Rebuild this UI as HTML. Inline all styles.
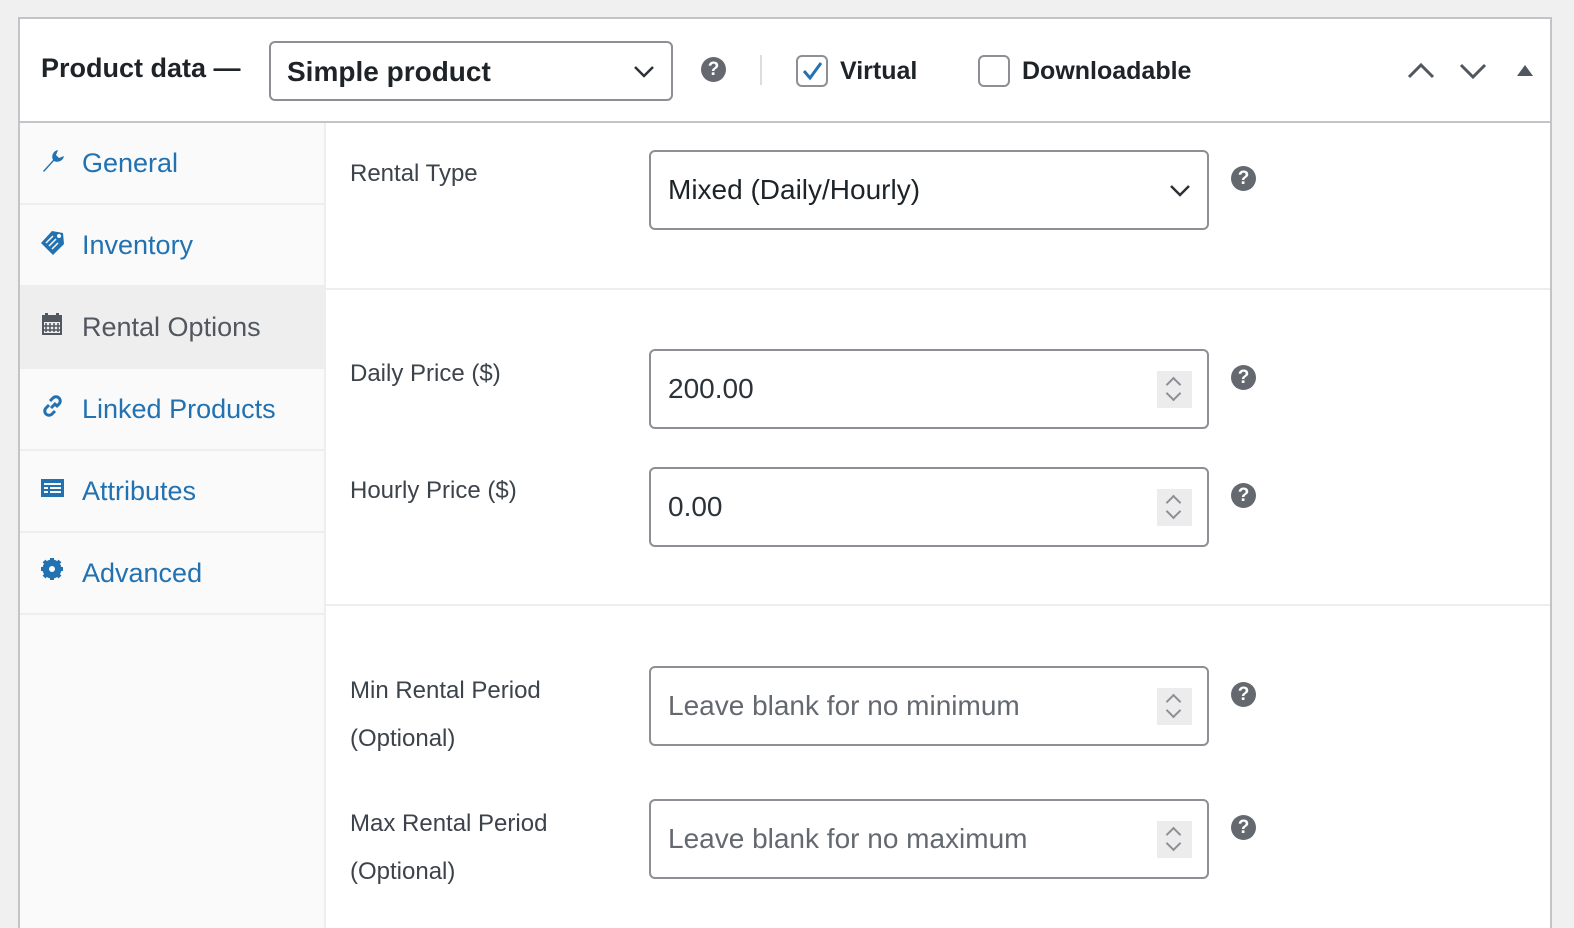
<!DOCTYPE html>
<html><head><style>
*{box-sizing:border-box;margin:0;padding:0}
html,body{width:1574px;height:928px;overflow:hidden}
body{background:#f0f0f1;font-family:"Liberation Sans",sans-serif;position:relative}
.panel{position:absolute;left:18px;top:17px;width:1534px;height:911px;background:#fff;border:2px solid #c3c4c7;border-bottom:none;overflow:hidden}
.hdr{position:absolute;left:0;top:0;width:100%;height:104px;border-bottom:2px solid #c3c4c7}
.abs{position:absolute}
.title{left:21px;top:34px;font-size:27px;font-weight:bold;color:#1d2327}
.sel{border:2px solid #8c8f94;border-radius:6px;background:#fff}
.q{width:25px;height:25px;border-radius:50%;background:#646970;color:#fff;font-weight:bold;font-size:19px;text-align:center;line-height:25px}
.side{position:absolute;left:0;top:104px;width:306px;height:830px;background:#fafafa;border-right:2px solid #eee}
.item{height:82px;border-bottom:2px solid #eee;position:relative;font-size:27px;color:#2271b1}
.item span{position:absolute;left:62px;top:25px}
.item svg{position:absolute;left:20px;top:24px}
.item.act{background:#eee;color:#50575e}
.lbl{font-size:24px;color:#3c434a;line-height:48px}
.inp{border:2px solid #8c8f94;border-radius:6px;background:#fff;width:560px;height:80px;font-size:28px;color:#2c3338;padding-left:17px;line-height:76px}
.spin{position:absolute;right:15px;top:20px;width:35px;height:37px;background:#ececec}
.ph{color:#646970}
.sep{position:absolute;left:306px;width:1226px;height:2px;background:#eee}
.spin::before{content:"";position:absolute;left:11px;top:8px;width:9px;height:9px;border-left:2px solid #8c8f94;border-top:2px solid #8c8f94;transform:rotate(45deg)}
.spin::after{content:"";position:absolute;left:11px;top:17px;width:9px;height:9px;border-right:2px solid #8c8f94;border-bottom:2px solid #8c8f94;transform:rotate(45deg)}
</style></head><body>
<div class="panel">
 <div class="hdr">
  <div class="abs title">Product data —</div>
  <div class="abs sel" style="left:249px;top:22px;width:404px;height:60px;font-size:28px;font-weight:bold;color:#1d2327;padding:13px 0 0 16px">Simple product
   <svg class="abs" style="right:16px;top:22px" width="22" height="14" viewBox="0 0 22 14"><path d="M2 2l9 9 9-9" stroke="#2c3338" stroke-width="2.5" fill="none"/></svg></div>
  <div class="abs q" style="left:681px;top:38px">?</div>
  <div class="abs" style="left:740px;top:36px;width:2px;height:30px;background:#ddd"></div>
  <div class="abs" style="left:776px;top:36px;width:32px;height:32px;border:2px solid #8c8f94;border-radius:6px"><svg width="28" height="28" viewBox="0 0 28 28"><path d="M6 14l6 7 11-15" stroke="#2271b1" stroke-width="3" fill="none"/></svg></div>
  <div class="abs" style="left:820px;top:38px;font-size:25px;font-weight:bold;color:#1d2327">Virtual</div>
  <div class="abs" style="left:958px;top:36px;width:32px;height:32px;border:2px solid #8c8f94;border-radius:6px"></div>
  <div class="abs" style="left:1002px;top:38px;font-size:25px;font-weight:bold;color:#1d2327">Downloadable</div>
  <svg class="abs" style="left:1386px;top:42px" width="30" height="20"><path d="M3 16l12-12 12 12" stroke="#50575e" stroke-width="3" fill="none"/></svg>
  <svg class="abs" style="left:1438px;top:42px" width="30" height="20"><path d="M3 4l12 12 12-12" stroke="#50575e" stroke-width="3" fill="none"/></svg>
  <svg class="abs" style="left:1496px;top:44px" width="18" height="14"><path d="M1 13L9 2l8 11z" fill="#50575e"/></svg>
 </div>
 <div class="side">
  <div class="item"><svg width="24" height="26" viewBox="0 0 24 26"><path d="M3 24l10-11c-2-4 0-9 5-10l-2 5 3 3 5-2c-1 5-6 7-10 5L4 25z" fill="#2271b1"/></svg><span>General</span></div>
  <div class="item"><svg width="26" height="26" viewBox="0 0 26 26"><path d="M12 2l11 2 1 11-11 11L1 14z" fill="#2271b1"/><circle cx="19" cy="7" r="2" fill="#fafafa"/><path d="M6 14l7-7M9 17l7-7M12 20l6-6" stroke="#fafafa" stroke-width="1.5"/></svg><span>Inventory</span></div>
  <div class="item act"><svg width="24" height="26" viewBox="0 0 24 26"><rect x="2" y="4" width="20" height="20" fill="#50575e"/><rect x="5" y="2" width="3" height="5" fill="#50575e"/><rect x="16" y="2" width="3" height="5" fill="#50575e"/><path d="M4 11h16v11H4z" fill="#eee"/><path d="M6 12v9M10 12v9M14 12v9M18 12v9M4 15h16M4 19h16" stroke="#50575e" stroke-width="1.5"/></svg><span>Rental Options</span></div>
  <div class="item"><svg width="26" height="26" viewBox="0 0 26 26"><path d="M11 15l5-5M10 8l3-3a4 4 0 016 6l-3 3M15 18l-3 3a4 4 0 01-6-6l3-3" stroke="#2271b1" stroke-width="3" fill="none"/></svg><span>Linked Products</span></div>
  <div class="item"><svg width="26" height="26" viewBox="0 0 26 26"><rect x="1" y="4" width="23" height="18" fill="#2271b1"/><path d="M4 9h17M4 13h4M10 13h11M4 17h4M10 17h11" stroke="#fafafa" stroke-width="2"/></svg><span>Attributes</span></div>
  <div class="item"><svg width="26" height="26" viewBox="0 0 26 26"><circle cx="12" cy="12" r="7" fill="none" stroke="#2271b1" stroke-width="5"/><path d="M12 1v22M1 12h22M4 4l16 16M20 4L4 20" stroke="#2271b1" stroke-width="4"/><circle cx="12" cy="12" r="3" fill="#fafafa"/></svg><span>Advanced</span></div>
 </div>
 <div class="abs lbl" style="left:330px;top:131px">Rental Type</div>
 <div class="abs sel" style="left:629px;top:131px;width:560px;height:80px;font-size:28px;color:#1d2327;padding:22px 0 0 17px">Mixed (Daily/Hourly)
  <svg class="abs" style="right:16px;top:32px" width="22" height="14" viewBox="0 0 22 14"><path d="M2 2l9 9 9-9" stroke="#2c3338" stroke-width="2.5" fill="none"/></svg></div>
 <div class="abs q" style="left:1211px;top:147px">?</div>
 <div class="sep" style="top:269px"></div>
 <div class="abs lbl" style="left:330px;top:331px">Daily Price ($)</div>
 <div class="abs inp" style="left:629px;top:330px">200.00<div class="spin"></div></div>
 <div class="abs q" style="left:1211px;top:346px">?</div>
 <div class="abs lbl" style="left:330px;top:448px">Hourly Price ($)</div>
 <div class="abs inp" style="left:629px;top:448px">0.00<div class="spin"></div></div>
 <div class="abs q" style="left:1211px;top:464px">?</div>
 <div class="sep" style="top:585px"></div>
 <div class="abs lbl" style="left:330px;top:648px">Min Rental Period<br>(Optional)</div>
 <div class="abs inp ph" style="left:629px;top:647px">Leave blank for no minimum<div class="spin"></div></div>
 <div class="abs q" style="left:1211px;top:663px">?</div>
 <div class="abs lbl" style="left:330px;top:781px">Max Rental Period<br>(Optional)</div>
 <div class="abs inp ph" style="left:629px;top:780px">Leave blank for no maximum<div class="spin"></div></div>
 <div class="abs q" style="left:1211px;top:796px">?</div>
</div>
</body></html>
